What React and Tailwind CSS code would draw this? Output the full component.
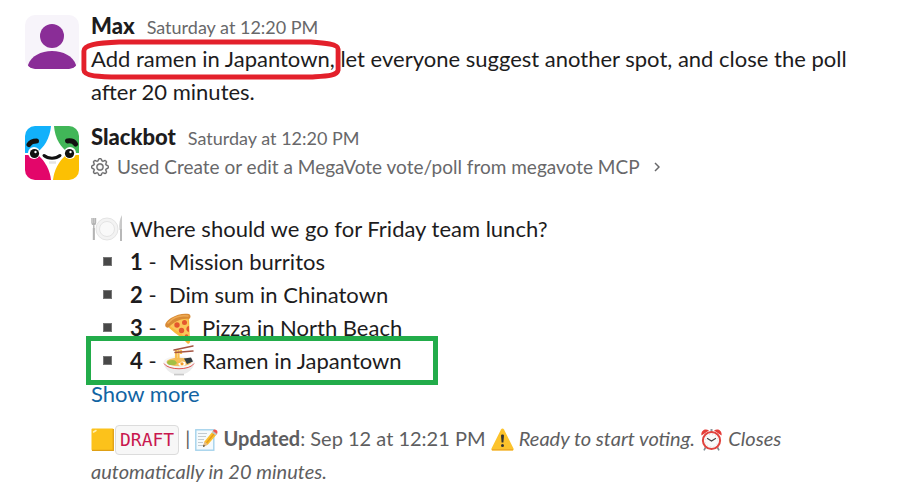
import React from 'react';
import { BsGear } from 'react-icons/bs';

function UserAvatar() {
  return (
    <svg viewBox="0 0 54 54" className="w-[54px] h-[54px] rounded-[10px] shrink-0" role="img" aria-label="Max">
      <rect width="54" height="54" fill="#f7f4fa" />
      <circle cx="27" cy="21" r="12" fill="#8a2d97" />
      <path d="M3 50C6 41 16 36 27 36S48 41 51 50C51 52 48 54 45 54H9C6 54 3 52 3 50Z" fill="#8a2d97" />
    </svg>
  );
}

function BotAvatar() {
  return (
    <svg viewBox="0 0 54 54" className="w-[54px] h-[54px] rounded-[10px] shrink-0" role="img" aria-label="Slackbot">
      <rect width="54" height="54" fill="#fff" />
      <path d="M0 0H26C25 12 19 22 11 27H0Z" fill="#12b1fb" />
      <path d="M29 0H54V27H44C36 22 30 13 29 0Z" fill="#41b658" />
      <path d="M0 29H13C20 35 25 44 26 54H0Z" fill="#e3066a" />
      <path d="M54 29H41C34 35 29 44 28 54H54Z" fill="#fcc003" />
      <circle cx="9" cy="27" r="6" fill="#fff" />
      <circle cx="45" cy="27" r="6" fill="#fff" />
      <circle cx="9.500" cy="27.500" r="4.600" fill="#111" />
      <circle cx="44.500" cy="27.500" r="4.600" fill="#111" />
      <circle cx="10.500" cy="26" r="1.200" fill="#fff" />
      <circle cx="45.500" cy="26" r="1.200" fill="#fff" />
      <path d="M4 18.500C5.500 16 8 15 11.500 15M42.500 15C46 14.500 49 15.500 50.500 18" fill="none" stroke="#111" strokeWidth="5" strokeLinecap="round" />
      <path d="M19 29.500C23 33 31 33 35 29.500" fill="none" stroke="#111" strokeWidth="3" strokeLinecap="round" />
      <path d="M24 36.500H31" stroke="#e4e4e4" strokeWidth="2.400" />
    </svg>
  );
}

function PlateIcon() {
  return (
    <svg viewBox="0 0 32 32" className="inline-block w-8 h-8 align-middle" aria-hidden="true">
      <circle cx="16" cy="16" r="11" fill="#f3f3f3" stroke="#e4e4e4" />
      <circle cx="16" cy="16" r="7.500" fill="#f9f9f9" stroke="#e4e4e4" />
      <path d="M1 5V10C1 12 4.500 12 4.500 10V5M2.800 5V27" fill="none" stroke="#b4b4b4" strokeWidth="1.400" />
      <path d="M2.800 15V27" stroke="#b4b4b4" strokeWidth="2" />
      <path d="M31 2C28.500 6 28 11 28.500 17H31Z" fill="#c9c9c9" />
      <path d="M30 16V28" stroke="#b8b8b8" strokeWidth="2" />
    </svg>
  );
}

function PizzaIcon() {
  return (
    <svg viewBox="0 0 32 32" className="inline-block w-8 h-8 align-middle" aria-hidden="true">
      <path d="M4 14C9 8 18 4 26 5L27 29C27 32 25 33 23 30L20 27C15 23 9 19 4 14Z" fill="#f9b83c" />
      <path d="M7 14C12 9 19 6 25 8L26 28C21 23 13 19 7 14Z" fill="#fbc75a" />
      <path d="M3 15C1 13 3 9 8 6C14 2 21 1 26 2C28 3 28 6 26 7C19 6 12 9 6 15C5 16 4 16 3 15Z" fill="#d88a35" />
      <path d="M5 11C10 5 18 3 25 4" fill="none" stroke="#efac55" strokeWidth="1.500" strokeLinecap="round" />
      <circle cx="14" cy="13" r="2.700" fill="#e4572e" />
      <circle cx="21.500" cy="10.500" r="2.500" fill="#e4572e" />
      <circle cx="18.500" cy="18.500" r="2.700" fill="#e4572e" />
      <path d="M26 14C23 14 22 19 26 20Z" fill="#e4572e" />
      <circle cx="23.500" cy="24" r="1.800" fill="#e4572e" />
    </svg>
  );
}

function RamenIcon() {
  return (
    <svg viewBox="0 0 32 32" className="inline-block w-8 h-8 align-middle" aria-hidden="true">
      <path d="M0.500 17C1 24 7 28 11 29V30.500H21V29C25 28 31 24 31.500 17Z" fill="#ececec" />
      <path d="M11 29.500H21" stroke="#c9c9c9" strokeWidth="1.500" />
      <ellipse cx="16" cy="17" rx="15.500" ry="6" fill="#f6f6f6" />
      <ellipse cx="16" cy="17" rx="12.500" ry="4.200" fill="#f2c063" />
      <path d="M1 18.500C5 25.500 27 25.500 31 18.500" fill="none" stroke="#e2524e" strokeWidth="1" />
      <ellipse cx="9" cy="17.500" rx="4.800" ry="2.600" fill="#a3bf45" />
      <path d="M21 13.500L28 12.500L30 16.500L24 19Z" fill="#303c40" />
      <ellipse cx="19" cy="18.800" rx="3.600" ry="2.200" fill="#fff" />
      <circle cx="19" cy="18.800" r="1.600" fill="#f39a27" />
      <path d="M13 5V14C13 17 16 18 18 16M15.500 5V14M18 5V9" fill="none" stroke="#f8bd50" strokeWidth="2.200" />
      <path d="M11 5L30 1M12 7.500L30 6" stroke="#a65543" strokeWidth="1.500" strokeLinecap="round" />
    </svg>
  );
}

function SquareIcon() {
  return (
    <svg viewBox="0 0 23 23" className="inline-block w-[23px] h-[23px] align-[-5px]" aria-hidden="true">
      <rect x="0.500" y="0.500" width="22" height="22" rx="1" fill="#fcc21b" />
      <path d="M1 22.300H22.300V1" fill="none" stroke="#dfa015" strokeWidth="1.300" />
      <path d="M2.500 4L5 2.500" stroke="#fff0b0" strokeWidth="1.500" strokeLinecap="round" />
    </svg>
  );
}

function MemoIcon() {
  return (
    <svg viewBox="0 0 23 23" className="inline-block w-[23px] h-[23px] align-[-5px]" aria-hidden="true">
      <rect x="0.800" y="1.800" width="18" height="20.400" fill="#f5fafc" stroke="#a4d2ec" strokeWidth="1.400" />
      <path d="M3 5.500H12M3 8.500H11M3 11.500H9M3 14.500H8M3 17.500H8" stroke="#c3cbd0" strokeWidth="1" />
      <path d="M8 19L9.500 13.500L18 3L22 6L13 16.500Z" fill="#fbbf2c" />
      <path d="M11.500 15L20 4.500" stroke="#e69a1c" strokeWidth="1.200" />
      <path d="M8 19L9.500 13.500L13 16.500Z" fill="#e6bd8a" />
      <path d="M8 19L8.600 16.700L10.200 18Z" fill="#3a3a3a" />
      <path d="M16.800 4.500L18 3L22 6L20.800 7.500Z" fill="#b9c8cf" />
      <path d="M18 3C19 0 24 2 22 6Z" fill="#ee5350" />
    </svg>
  );
}

function WarningIcon() {
  return (
    <svg viewBox="0 0 23 23" className="inline-block w-[23px] h-[23px] align-[-5px]" aria-hidden="true">
      <path d="M10 1.500C10.700 0.200 12.300 0.200 13 1.500L22.500 20.500C23 21.700 22.400 22.500 21 22.500H2C0.600 22.500 0 21.700 0.500 20.500Z" fill="#fcc32c" />
      <path d="M1 21.800H22" stroke="#eca522" strokeWidth="1.200" />
      <path d="M10 7.500C10 6 13 6 13 7.500L12.400 14.500H10.600Z" fill="#333" />
      <circle cx="11.500" cy="17.500" r="1.500" fill="#333" />
    </svg>
  );
}

function AlarmIcon() {
  return (
    <svg viewBox="0 0 23 23" className="inline-block w-[23px] h-[23px] align-[-5px]" aria-hidden="true">
      <path d="M5.500 19.500L4 22.300M17.500 19.500L19 22.300" stroke="#7d8a90" strokeWidth="1.600" />
      <path d="M1.500 7.500C0.500 3 5 -0.500 9 2.500ZM21.500 7.500C22.500 3 18 -0.500 14 2.500Z" fill="#e53c38" />
      <path d="M11.500 1V4" stroke="#8b969b" strokeWidth="2" />
      <circle cx="11.500" cy="12.500" r="8.600" fill="#fafafa" stroke="#e0433e" strokeWidth="2" />
      <circle cx="11.500" cy="12.500" r="6.300" fill="none" stroke="#c9c9c9" strokeWidth="0.800" strokeDasharray="0.800 2.500" />
      <path d="M7.500 10.500L11.500 13L15.500 10.500" fill="none" stroke="#444" strokeWidth="1.200" strokeLinecap="round" />
    </svg>
  );
}

const options = [
  { id: 1, label: 'Mission burritos' },
  { id: 2, label: 'Dim sum in Chinatown' },
  { id: 3, label: 'Pizza in North Beach', icon: <PizzaIcon /> },
  { id: 4, label: 'Ramen in Japantown', icon: <RamenIcon />, marked: true },
];

function Message({ avatar, name, time, children }) {
  return (
    <article className="flex gap-3">
      <div className="pt-1.5">{avatar}</div>
      <div className="flex-1 min-w-0">
        <header className="flex items-baseline gap-3">
          <span className="font-black">{name}</span>
          <a href="#time" className="text-[18px] leading-6 text-[#68686a]">{time}</a>
        </header>
        {children}
      </div>
    </article>
  );
}

export default function App() {
  return (
    <main className="bg-white pl-[25px] pr-11 pt-[9px] font-['Lato',sans-serif] text-[22px] leading-[33px] text-[#1d1c1d]">
      {/* Request */}
      <Message avatar={<UserAvatar />} name="Max" time="Saturday at 12:20 PM">
        <p>
          <span className="relative">
            Add ramen in Japantown,
            <svg viewBox="0 0 268 42" preserveAspectRatio="none" className="absolute -left-[11px] -top-1.5 w-[262px] h-[42px] pointer-events-none" aria-hidden="true">
              <path d="M4 12C4 6 16 4 40 3H236C250 4 264 5 264 10V31C263 37 252 37 236 38H40C20 38 4 37 4 31Z" fill="none" stroke="#e3202b" strokeWidth="5" />
            </svg>
          </span>{' '}
          let everyone suggest another spot, and close the poll after 20 minutes.
        </p>
      </Message>

      {/* Bot reply */}
      <div className="mt-3">
        <Message avatar={<BotAvatar />} name="Slackbot" time="Saturday at 12:20 PM">
          <button type="button" className="flex items-center text-[19px] leading-7 text-[#68686a]">
            <BsGear className="w-[18px] h-[18px] mr-2" stroke="currentColor" strokeWidth="0.300" />
            Used Create or edit a MegaVote vote/poll from megavote MCP
            <svg viewBox="0 0 6 10" className="w-[6px] h-[10px] ml-3.5" aria-hidden="true">
              <path d="M1 1L5 5L1 9" fill="none" stroke="currentColor" strokeWidth="1.500" />
            </svg>
          </button>

          <section className="mt-[31px]">
            <h2 className="flex items-center gap-[7px]">
              <PlateIcon />
              Where should we go for Friday team lunch?
            </h2>
            <ul>
              {options.map((o) => (
                <li key={o.id} className="relative flex items-center h-[33px] pl-3">
                  <span className="w-[9px] h-[9px] bg-[#484848] border border-[#777] mr-[18px]" />
                  <span className="w-[33px] shrink-0 whitespace-nowrap"><b>{o.id}</b> -</span>
                  {o.icon
                    ? <span className="flex items-center gap-[7px]">{o.icon}{o.label}</span>
                    : <span className="pl-1.5">{o.label}</span>}
                  {o.marked && <span className="absolute z-10 -left-[5px] -top-2 w-[352px] h-[49px] border-5 border-[#22ac4a] pointer-events-none" />}
                </li>
              ))}
            </ul>
            <button type="button" className="block text-[#1264a3]">Show more</button>
          </section>

          {/* Status line */}
          <footer className="mt-3 text-[20px] text-[#5e5e60]">
            <SquareIcon />
            <code className="inline-block rounded-[4px] border border-[#dcdcdc] bg-[#f7f7f7] px-1 py-0.5 mx-px text-[18px] leading-6 font-['DejaVu_Sans_Mono',monospace] text-[#c9184f]">DRAFT</code>
            {' | '}
            <MemoIcon /> <b>Updated</b>: Sep 12 at 12:21 PM <WarningIcon />{' '}
            <i>Ready to start voting.</i> <AlarmIcon /> <i>Closes automatically in 20 minutes.</i>
          </footer>
        </Message>
      </div>
    </main>
  );
}
